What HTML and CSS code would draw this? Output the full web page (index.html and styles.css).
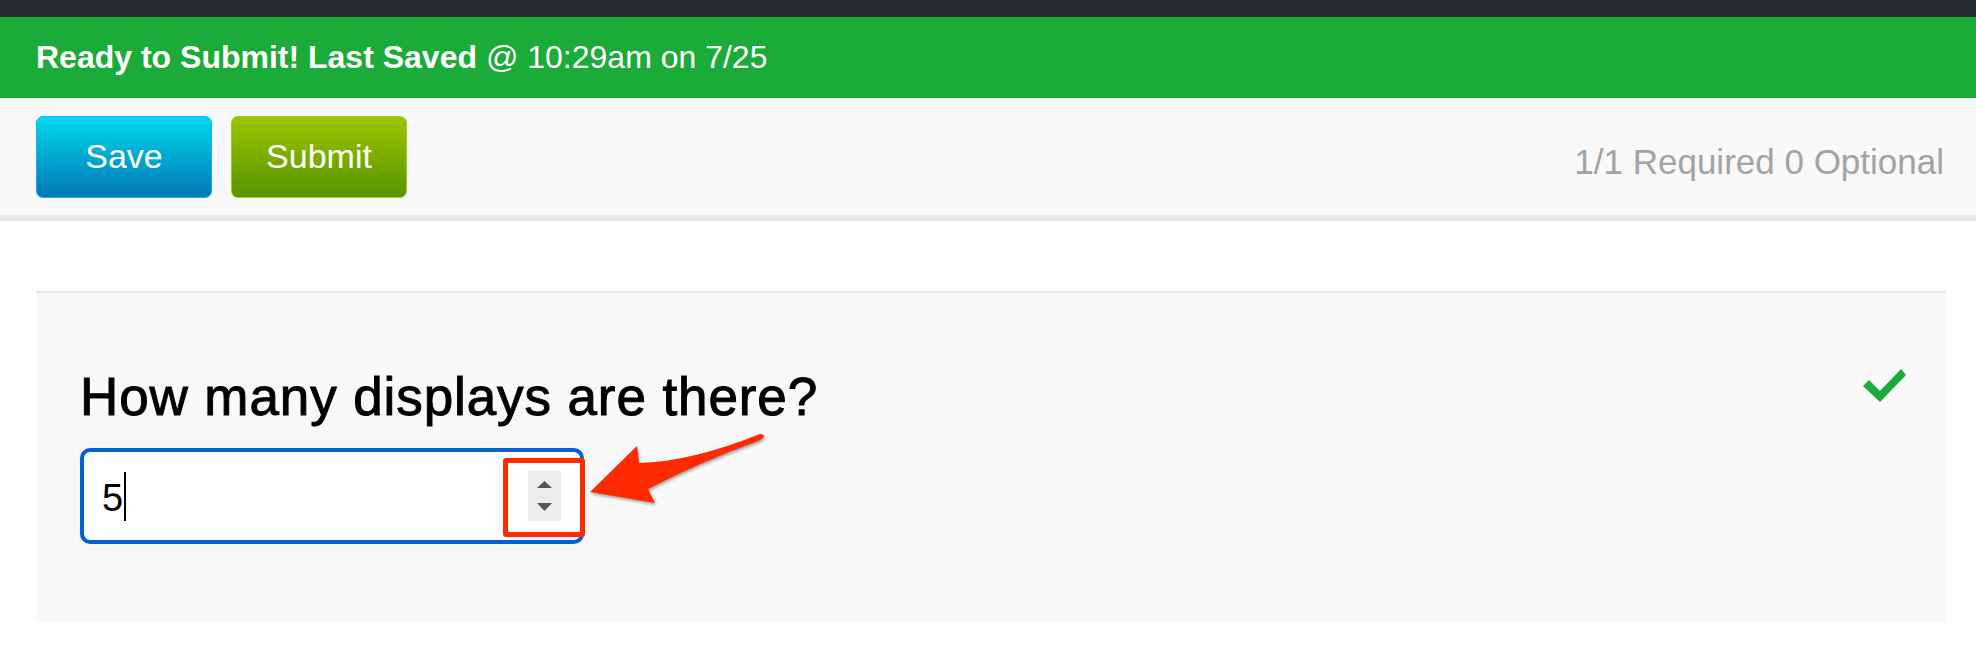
FILE: index.html
```html
<!DOCTYPE html>
<html lang="en">
<head>
<meta charset="utf-8">
<title>Form</title>
<link rel="stylesheet" href="styles.css">
</head>
<body>
<div class="topbar"></div>
<div class="status"><b>Ready to Submit! Last Saved</b> @ 10:29am on 7/25</div>
<div class="toolbar">
  <div class="actions">
    <button class="btn btn-save">Save</button>
    <button class="btn btn-submit">Submit</button>
  </div>
  <div class="progress">1/1 Required 0 Optional</div>
</div>
<div class="content">
  <div class="card">
    <div class="field">
      <div class="question">How many displays are there?</div>
      <div class="numinput">
        <span class="value">5</span><span class="caret"></span>
        <span class="spinner">
          <svg width="33" height="50" viewBox="0 0 33 50"><path d="M9 17 L16.5 10 L24 17 Z" fill="#555"/><path d="M9 32 L24 32 L16.5 40 Z" fill="#555"/></svg>
        </span>
      </div>
    </div>
    <svg class="check" width="44" height="34" viewBox="0 0 44 34"><path d="M6 11 L17 22 L38 0 L43 6 L17 33 L0 17 Z" fill="#1bab38"/></svg>
    <div class="highlight"></div>
    <svg class="arrow" width="200" height="90" viewBox="0 0 200 90"><path d="M10 67 L57 21 L59 38 Q110 37 180 9 Q189 10 178 16 Q120 37 68 64 L75 78 Z" fill="#ff2a00"/></svg>
  </div>
</div>
</body>
</html>
```
FILE: styles.css
```css
* { box-sizing: border-box; }
html, body { margin: 0; padding: 0; background: #fff; }
body { font-family: "Liberation Sans", Arial, sans-serif; width: 1976px; height: 656px; overflow: hidden; }

.topbar { height: 17px; background: #272b30; }

.status {
  height: 81px;
  background: #1bab38;
  color: #fff;
  font-size: 32px;
  line-height: 81px;
  padding-left: 36px;
  white-space: nowrap;
}

.toolbar {
  height: 123px;
  background: #f9f9f9;
  border-bottom: 6px solid #e7e8ec;
  display: flex;
  align-items: center;
  justify-content: space-between;
  padding: 0 32px 0 36px;
}
.actions { display: flex; gap: 19px; }
.btn {
  width: 176px;
  height: 82px;
  border-radius: 7px;
  font-family: "Liberation Sans", Arial, sans-serif;
  font-size: 34px;
  color: #fff;
  padding: 0;
  cursor: pointer;
}
.btn-save {
  border: 1px solid #14b4ec;
  background: linear-gradient(#00d9ee, #0078b3);
}
.btn-submit {
  border: 1px solid #a8cc1c;
  background: linear-gradient(#9bc600, #5a9400);
}
.progress { font-size: 35px; color: #a3a3a3; padding-top: 10px; }

.content { padding: 70px 30px 0 36px; }

.card {
  position: relative;
  background: #f9f9f9;
  border-top: 2px solid #e6e7eb;
  height: 331px;
  padding: 74px 39px 0 44px;
  display: flex;
  justify-content: space-between;
  align-items: flex-start;
}
.question {
  font-size: 53px;
  line-height: 60px;
  letter-spacing: 0.9px;
  color: #000;
  -webkit-text-stroke: 1px #000;
  white-space: nowrap;
}
.numinput {
  margin-top: 21px;
  width: 504px;
  height: 96px;
  border: 4px solid #0062d1;
  border-radius: 10px;
  background: #fff;
  display: flex;
  align-items: center;
  padding-left: 18px;
  padding-right: 19px;
}
.value { font-size: 38px; color: #000; line-height: 40px; padding-top: 4px; }
.caret { width: 2px; height: 49px; background: #000; margin-left: 1px; }
.spinner {
  margin-left: auto;
  width: 33px;
  height: 50px;
  background: #ededed;
  display: block;
}
.spinner svg { display: block; }
.check { margin-top: 2px; }

.highlight {
  position: absolute;
  left: 467px;
  top: 165px;
  width: 82px;
  height: 79px;
  border: 5px solid #ff2a00;
  border-radius: 3px;
}
.arrow {
  position: absolute;
  left: 544px;
  top: 132px;
  filter: drop-shadow(1px 2px 1.5px rgba(0,0,0,0.35));
}
```
